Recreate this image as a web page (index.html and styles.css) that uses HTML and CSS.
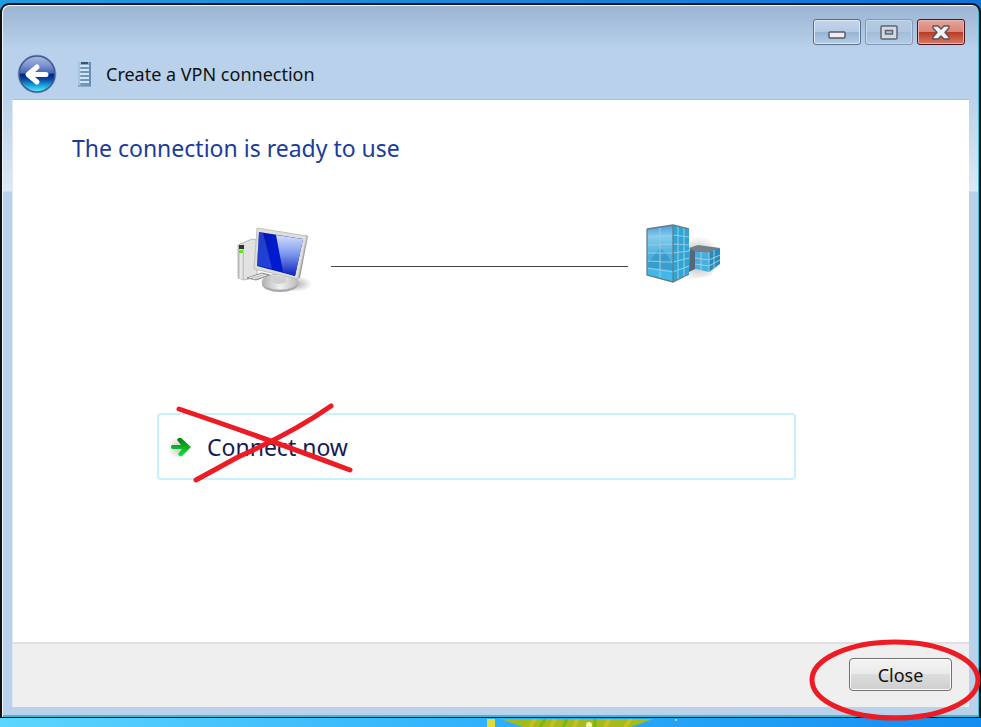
FILE: index.html
```html
<!DOCTYPE html>
<html lang="en">
<head>
    <meta charset="utf-8">
    <title>Create a VPN connection</title>
    <link rel="stylesheet" href="styles.css">
</head>
<body>
    <div class="window">
        <div class="caption">
            <button class="caption-button" type="button" aria-label="Minimize">
                <svg width="18" height="8" viewBox="0 0 18 8">
                    <rect x="1" y="1" width="16" height="6" rx="1" fill="#eee" stroke="#555a6c" stroke-width="1.5"/>
                </svg>
            </button>
            <button class="caption-button faded" type="button" aria-label="Maximize">
                <svg width="18" height="15" viewBox="0 0 18 15">
                    <rect x="1" y="1" width="16" height="13" rx="1" fill="#d5d8dd" stroke="#5e6475" stroke-width="1.5"/>
                    <rect x="5.5" y="5.5" width="7" height="3.5" fill="#a9c0dc" stroke="#5e6475" stroke-width="1.5"/>
                </svg>
            </button>
            <button class="caption-button red" type="button" aria-label="Close window">
                <svg width="18" height="15" viewBox="0 0 18 15">
                    <path d="M1 1h5l3 3 3-3h5v2l-4 4.5 4 4.5v2h-5l-3-3-3 3H1v-2l4-4.5L1 3z" fill="#f2f2f2" stroke="#5b5262" stroke-width="1.4" stroke-linejoin="round"/>
                </svg>
            </button>
        </div>
        <div class="header">
            <button class="back" type="button" aria-label="Back">
                <svg width="40" height="40" viewBox="0 0 40 40">
                    <defs>
                        <linearGradient id="orb" x1="0" y1="0" x2="0" y2="1">
                            <stop offset="0" stop-color="#a9b9e4"/>
                            <stop offset=".25" stop-color="#7f95d1"/>
                            <stop offset=".48" stop-color="#3f62b4"/>
                            <stop offset=".5" stop-color="#05217e"/>
                            <stop offset=".65" stop-color="#08499f"/>
                            <stop offset=".85" stop-color="#1fb4e4"/>
                            <stop offset="1" stop-color="#6ceaf8"/>
                        </linearGradient>
                    </defs>
                    <circle cx="20" cy="20" r="19" fill="#dbe8f6" stroke="#9fb4d0" stroke-width="1"/>
                    <circle cx="20" cy="20" r="18" fill="url(#orb)" stroke="#3d588c" stroke-width="1.5"/>
                    <path d="M20 13L11 20.5l9 7.500M12 20.500h17" fill="none" stroke="#fff" stroke-width="5" stroke-linecap="round" stroke-linejoin="round"/>
                </svg>
            </button>
            <svg class="server" width="14" height="26" viewBox="0 0 14 26">
                <rect x="0" y="1" width="13" height="24" fill="#86a9cc"/>
                <rect x="0" y="1" width="3" height="24" fill="#a5c6e2"/>
                <rect x="11" y="1" width="2" height="24" fill="#658db5"/>
                <path d="M3 2h7" stroke="#345675" stroke-width="2"/>
                <path d="M2 5h9M2 9h9M2 13h9M2 17h9M2 21h9" stroke="#d3e5f5" stroke-width="2"/>
                <path d="M2 7h9M2 11h9M2 15h9M2 19h9M2 23h9M0 25h13" stroke="#5d85aa" stroke-width="1"/>
            </svg>
            <span class="window-title">Create a VPN connection</span>
        </div>

        <main class="content">
            <h1>The connection is ready to use</h1>
            <div class="wizard">
                <div class="diagram">
                    <svg width="76" height="70" viewBox="0 0 76 70">
                        <defs>
                            <linearGradient id="screen" x1="0" y1="0" x2="1" y2=".2">
                                <stop offset="0" stop-color="#0016a8"/>
                                <stop offset=".5" stop-color="#001bd2"/>
                                <stop offset="1" stop-color="#0015b0"/>
                            </linearGradient>
                            <linearGradient id="shine" x1="0" y1="0" x2="0" y2="1">
                                <stop offset="0" stop-color="#d3dffc"/>
                                <stop offset=".45" stop-color="#7f9aee"/>
                                <stop offset="1" stop-color="#0c1fc0"/>
                            </linearGradient>
                            <linearGradient id="metal" x1="0" y1="0" x2="1" y2="0">
                                <stop offset="0" stop-color="#b0b0b0"/>
                                <stop offset=".5" stop-color="#f1f1f1"/>
                                <stop offset="1" stop-color="#bbb"/>
                            </linearGradient>
                            <radialGradient id="shadow">
                                <stop offset="0" stop-color="#888" stop-opacity=".7"/>
                                <stop offset="1" stop-color="#888" stop-opacity="0"/>
                            </radialGradient>
                        </defs>
                        <ellipse cx="58" cy="60" rx="17" ry="8" fill="url(#shadow)"/>
                        <path d="M1 21l14-6 5 1v37L7 56l-6-2z" fill="#e2e2e2" stroke="#aaa" stroke-width=".8"/>
                        <path d="M1 21l6-1v36l-6-2z" fill="url(#metal)"/>
                        <path d="M2 21h5v4H2z" fill="#333"/>
                        <path d="M2 26h4v3H2z" fill="#62e719"/>
                        <path d="M10 54l15-5 8 2-14 5z" fill="#bbb" stroke="#777" stroke-width=".8"/>
                        <path d="M12 54l14-4M16 55l13-4" stroke="#eee"/>
                        <ellipse cx="43" cy="60" rx="18" ry="8" fill="#a5a5a5"/>
                        <ellipse cx="43" cy="58" rx="18" ry="8" fill="url(#metal)" stroke="#b5b5b5" stroke-width=".8"/>
                        <path d="M36 51l13 2v5q-7 4-14 0z" fill="#d0d0d0"/>
                        <path d="M68 11l3 1-8 42-3 1z" fill="#9c9c9c"/>
                        <path d="M20 4l50 8-9 43-44-10z" fill="#dfded9" stroke="#b6b6b2" stroke-width=".8"/>
                        <path d="M22 8l44 7-8 37-38-10z" fill="url(#screen)"/>
                        <path d="M39 11l27 4-8 37-12-4z" fill="url(#shine)"/>
                        <path d="M22 8l4 .5 9 36-15-3z" fill="#4970ea" opacity=".45"/>
                    </svg>
                    <span class="link-line"></span>
                    <svg width="76" height="70" viewBox="0 0 76 70">
                        <defs>
                            <linearGradient id="glass" x1="0" y1="0" x2="0" y2="1">
                                <stop offset="0" stop-color="#4a9ad6"/>
                                <stop offset=".2" stop-color="#83ccf0"/>
                                <stop offset=".55" stop-color="#49b0df"/>
                                <stop offset="1" stop-color="#3bbdec"/>
                            </linearGradient>
                        </defs>
                        <path d="M43 20l7-8 26 7-2 21-10 12-36 6z" fill="url(#shadow)"/>
                        <path d="M43 24l9-3 22 3-10 5-18-1z" fill="#727f8d"/>
                        <path d="M43 27l20 2v19l-13-3-7 1z" fill="#45b0e0"/>
                        <path d="M63 28l11-4v16l-11 8z" fill="#258bbd"/>
                        <path d="M49 34l14 2 11-5M49 40l14 2 11-6M63 28v20M68 26v19M55 28v18" fill="none" stroke="#a2ccde" stroke-width="1"/>
                        <path d="M44 25l5 2v18l-6 3z" fill="#53687b"/>
                        <path d="M1 5l26-4v57L1 51z" fill="url(#glass)"/>
                        <path d="M27 1l16 4v45l-16 8z" fill="#2da5d8"/>
                        <path d="M2 39l12-15 7 6 6 12v4L2 44z" fill="#287daa" opacity=".4"/>
                        <path d="M1 13l26-2 16 2M1 21l26-1 16 1M1 29h26l16-2M1 37l26 1 16-4M1 44l26 4 16-6M1 51l26 7 16-8M14 3v51M32 3v53M38 4v49" fill="none" stroke="#99cadf" stroke-width="1.1"/>
                        <path d="M27 1v57M1 5v46l26 7 16-8M1 5l26-4 16 4" fill="none" stroke="#677c8a" stroke-width="1.3"/>
                    </svg>
                </div>
                <button class="command-link" type="button">
                    <svg width="28" height="26" viewBox="0 0 28 26">
                        <defs>
                            <linearGradient id="arrow" x1="0" y1="0" x2="0" y2="1">
                                <stop offset="0" stop-color="#0a7a08"/>
                                <stop offset="1" stop-color="#15e33c"/>
                            </linearGradient>
                        </defs>
                        <ellipse cx="12" cy="14" rx="12" ry="11" fill="url(#shadow)" opacity=".7"/>
                        <path d="M5 11h9l-4-5q1-3 4-2l10 9-9 9q-3 1-4-2l4-5H5q-2-2 0-4z" fill="url(#arrow)"/>
                    </svg>
                    Connect now
                    <svg class="cross" width="180" height="84" viewBox="0 0 180 84">
                        <path d="M5 7Q85 34 176 68M22 78L64 55Q120 30 157 4" fill="none" stroke="#ed1c24" stroke-width="5" stroke-linecap="round"/>
                    </svg>
                </button>
            </div>
        </main>

        <div class="footer">
            <button class="close-button" type="button">
                Close
                <svg class="ring" width="172" height="82" viewBox="0 0 172 82">
                    <ellipse cx="86" cy="41" rx="83" ry="38" fill="none" stroke="#ed1c24" stroke-width="5"/>
                </svg>
            </button>
        </div>
    </div>

    <div class="desktop-strip">
        <svg width="190" height="8" viewBox="0 0 190 8">
            <path d="M0 0h8v8H0z" fill="#e2dc3b"/>
            <path d="M14 0h152l-22 8H36z" fill="#a5bb1d"/>
            <path d="M48 0l-5 8M68 0l-4 8M90 0l-3 8M122 0l-4 8M144 0l-6 8" stroke="#c4c01c" stroke-width="4"/>
            <path d="M58 0l-5 8M80 0l-4 8M108 0v8" stroke="#78b80c" stroke-width="3"/>
            <circle cx="102" cy="6" r="3" fill="#f4f6a8"/>
            <circle cx="189" cy="1" r="1" fill="#dbe89a"/>
        </svg>
    </div>
</body>
</html>
```

FILE: styles.css
```css
* {
    box-sizing: border-box;
}
body {
    margin: 0;
    min-height: 100vh;
    padding-top: 3px;
    display: flex;
    flex-direction: column;
    overflow-x: hidden;
    font-family: "Noto Sans", "Open Sans", sans-serif;
    font-size: 18px;
    color: #111;
    background: linear-gradient(to right, #1e9be2, #0b73d8) top / 100% 12px no-repeat, #000;
}
button {
    font: inherit;
    color: inherit;
    padding: 0;
    cursor: pointer;
}
svg {
    display: block;
    flex: none;
}
.window {
    flex: 1;
    display: flex;
    flex-direction: column;
    border: 2px solid #111;
    border-bottom-width: 1px;
    border-radius: 9px 9px 0 0;
    padding: 0 10px 10px;
    background: linear-gradient(to bottom, #9ab4d2, #b9d1ea 44px, #b9d1ea 90px, #dce8f5 186px, #b9d1ea 187px);
    box-shadow: inset 1px 1px 0 #f0f6fb, inset -1px -2px 0 #28c3d8;
}
.caption {
    display: flex;
    justify-content: flex-end;
    gap: 4px;
    padding: 14px 4px 0 0;
}
.caption-button {
    display: flex;
    align-items: center;
    justify-content: center;
    width: 48px;
    height: 26px;
    border: 1px solid #5b6f8c;
    border-radius: 3px;
    background: linear-gradient(to bottom, #c3d5e9, #b5cae2 48%, #98b3d2 50%, #b4cde7);
    box-shadow: inset 0 0 0 1px #dde9f5;
}
.caption-button:first-child svg {
    margin-top: 6px;
}
.faded {
    border-color: #8299b8;
    background: linear-gradient(to bottom, #b6cbe2, #afc6df 48%, #a2bbd8 50%, #b3cce6);
    box-shadow: inset 0 0 0 1px #c4d7eb;
}
.red {
    border-color: #4c1420;
    background: linear-gradient(to bottom, #e5a49a, #d98779 48%, #b93820 50%, #d67b68);
    box-shadow: inset 0 0 0 1px #ecb5ac;
}
.header {
    display: flex;
    align-items: center;
    height: 54px;
    padding: 3px 0 0 5px;
}
.back {
    border: none;
    background: none;
    border-radius: 50%;
}
.server {
    margin: 0 14px 0 21px;
}
.window-title {
    line-height: 24px;
}
.content {
    flex: 1;
    background: #fff;
    border-top: 1px solid #a9bfd8;
    border-left: 1px solid #dfe9f4;
}
h1 {
    margin: 0;
    padding: 32px 59px 0;
    font-size: 23px;
    line-height: 32px;
    font-weight: normal;
    color: #1a3c9c;
}
.wizard {
    padding: 60px 173px 0 144px;
}
.diagram {
    display: flex;
    align-items: center;
    gap: 18px;
    padding: 0 74px 0 80px;
}
.link-line {
    flex: 1;
    height: 1px;
    margin-top: 14px;
    background: #444;
}
.command-link {
    position: relative;
    display: flex;
    align-items: center;
    gap: 12px;
    width: 100%;
    height: 67px;
    margin-top: 119px;
    padding-left: 8px;
    border: 2px solid #c9f1fb;
    border-radius: 4px;
    background: #fff;
    font-size: 23px;
    color: #151c55;
}
.cross {
    position: absolute;
    left: 15px;
    top: -13px;
}
.footer {
    display: flex;
    justify-content: flex-end;
    padding: 14px 17px 16px;
    background: #efefef;
    border-top: 2px solid #dfdfdf;
    border-left: 1px solid #dfe9f4;
}
.close-button {
    position: relative;
    width: 103px;
    height: 33px;
    border: 1px solid #707070;
    border-radius: 4px;
    background: linear-gradient(to bottom, #f3f3f3, #ebebeb 48%, #dcdcdc 50%, #cfcfcf);
    box-shadow: inset 0 0 0 1px #fbfbfb;
}
.ring {
    position: absolute;
    left: -41px;
    top: -20px;
    pointer-events: none;
}
.desktop-strip {
    height: 9px;
    padding: 1px 0 0 487px;
    background: linear-gradient(to right, #5dd5fd, #2fb0fb 50%, #148df0);
}
```
